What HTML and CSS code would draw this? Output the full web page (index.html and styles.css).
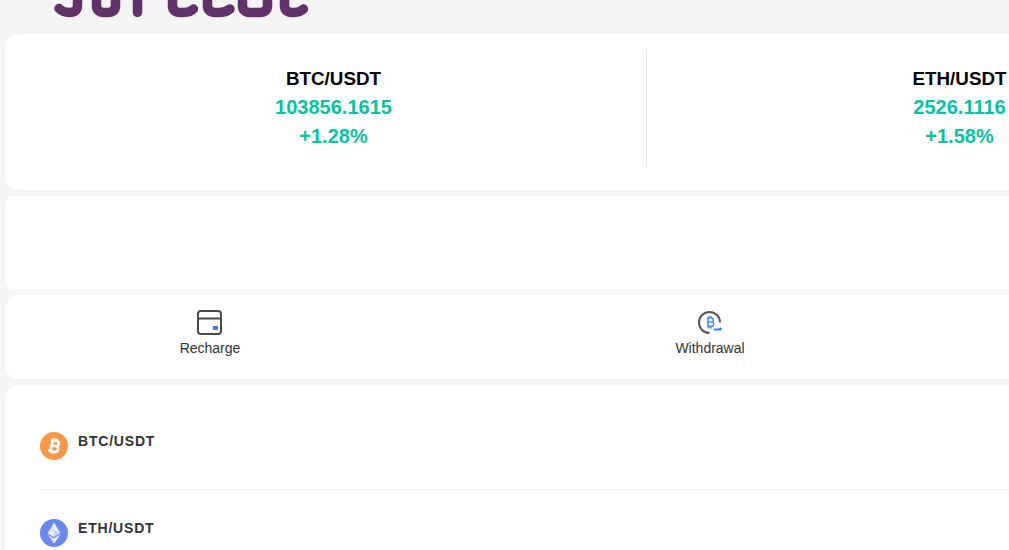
FILE: index.html
```html
<!DOCTYPE html>
<html lang="en">
<head>
<meta charset="utf-8">
<title>Markets</title>
<link rel="stylesheet" href="styles.css">
</head>
<body>
<div class="page">
  <header class="logo-bar">
    <svg class="logo" width="270" height="19" viewBox="0 0 270 19" role="img" aria-label="Logo">
      <g fill="none" stroke="#613169" stroke-width="9.5" stroke-linecap="round" stroke-linejoin="round">
        <path d="M5 8.5 C8 11.5 11 12.5 15 12.5 C21 12.5 23.5 10 23.5 5 V-6"/>
        <path d="M42.5 -6 V6 C42.5 10 45 12.5 50 12.5 H54 C59 12.5 61.5 10 61.5 6 V-6"/>
        <path d="M83.5 -6 V12.5"/>
        <path d="M118.5 -6 V6 C118.5 10 121 12.5 126 12.5 H130 C134 12.5 137 11.5 139.5 9"/>
        <path d="M153.5 -6 V6 C153.5 10 156 12.5 161 12.5 H165 C169 12.5 173 11.5 176 9"/>
        <path d="M188.5 -6 V6 C188.5 10 191 12.5 196 12.5 H206 C211 12.5 213.5 10 213.5 6 V-6"/>
        <path d="M230.5 -6 V6 C230.5 10 233 12.5 238 12.5 H240 C244 12.5 247 11.5 249.5 9"/>
      </g>
    </svg>
  </header>

  <section class="card tickers">
    <div class="ticker">
      <div class="t-name">BTC/USDT</div>
      <div class="t-val">103856.1615</div>
      <div class="t-val">+1.28%</div>
    </div>
    <div class="ticker second">
      <div class="t-name">ETH/USDT</div>
      <div class="t-val">2526.1116</div>
      <div class="t-val">+1.58%</div>
    </div>
  </section>

  <section class="card blank"></section>

  <section class="card actions">
    <div class="action">
      <svg width="26" height="26" viewBox="0 0 26 26" fill="none">
        <rect x="1" y="2" width="23" height="23" rx="3" stroke="#4a4a4a" stroke-width="2"/>
        <path d="M1 9.5H24" stroke="#4a4a4a" stroke-width="2"/>
        <rect x="16" y="17" width="5" height="4" fill="#3f7bf6"/>
      </svg>
      <span>Recharge</span>
    </div>
    <div class="action">
      <svg width="26" height="26" viewBox="0 0 26 26" fill="none">
        <path d="M23 13.5 A10.5 10.5 0 1 0 12.5 24" stroke="#555" stroke-width="2"/>
        <path d="M17 20.5H24.5M24.5 20.5l-2-1.5" stroke="#3f7bf6" stroke-width="2"/>
        <g stroke="#5b8ef5" stroke-width="1.6">
          <path d="M10 9H14.4C17 9 17 13 14.4 13H10M14.4 13C17.4 13 17.4 17.4 14.4 17.4H10M11 9V17.4"/>
          <path d="M12 7V9M14 7V9M12 17.4V19.4M14 17.4V19.4"/>
        </g>
      </svg>
      <span>Withdrawal</span>
    </div>
  </section>

  <section class="card list">
    <div class="row first">
      <svg width="28" height="28" viewBox="0 0 28 28">
        <circle cx="14" cy="14" r="14" fill="#f7984a"/>
        <g transform="rotate(14 14 14)" fill="none" stroke="#fff" stroke-width="2.7">
          <path d="M9.5 8.5H15.5C19 8.5 19 13.7 15.5 13.7H11M15.5 13.7C20 13.7 20 19.5 15.5 19.5H9.5M11.5 8.5V19.5"/>
          <path d="M12.8 6V8.5M15.6 6V8.5M12.8 19.5V22M15.6 19.5V22" stroke-width="1.6"/>
        </g>
      </svg>
      <span class="r-name">BTC/USDT</span>
    </div>
    <div class="row">
      <svg width="28" height="28" viewBox="0 0 28 28">
        <circle cx="14" cy="14" r="14" fill="#6a89ee"/>
        <path d="M14 3.5V11L7.6 14.2Z" fill="#fff" fill-opacity=".75"/>
        <path d="M14 3.5V11L20.4 14.2Z" fill="#fff" fill-opacity=".9"/>
        <path d="M14 11L7.6 14.2 14 18Z" fill="#fff" fill-opacity=".9"/>
        <path d="M14 11L20.4 14.2 14 18Z" fill="#fff" fill-opacity=".6"/>
        <path d="M7.6 15.6L14 19.4V24.5Z" fill="#fff" fill-opacity=".75"/>
        <path d="M20.4 15.6L14 19.4V24.5Z" fill="#fff" fill-opacity=".9"/>
      </svg>
      <span class="r-name">ETH/USDT</span>
    </div>
  </section>
</div>
</body>
</html>
```
FILE: styles.css
```css
* { box-sizing: border-box; }
html, body { margin: 0; height: 100%; overflow: hidden; }
body { background: #f5f5f5; font-family: "Liberation Sans", Arial, sans-serif; }
.page { width: 1272px; padding-left: 6px; display: flex; flex-direction: column; }
.logo-bar { height: 34px; padding-left: 48px; }
.logo { display: block; }
.card { background: #fff; border-radius: 12px; }
.tickers { height: 156px; display: flex; padding: 15px 0 23px 15px; }
.ticker { width: 626px; flex: none; text-align: center; padding-top: 15px; border-right: 1px solid #e5e5e5; }
.ticker.second { border-right: 0; width: 625px; }
.t-name { font-size: 18.8px; font-weight: 700; line-height: 29px; color: #000; }
.t-val { font-size: 20px; font-weight: 700; line-height: 29px; color: #0dc19c; }
.blank { height: 93px; margin-top: 6px; border-radius: 6px; }
.actions { height: 84px; margin-top: 6px; display: flex; padding-top: 14px; }
.action { width: 500px; flex: none; display: flex; flex-direction: column; align-items: center; color: #333; font-size: 14px; line-height: 18px; gap: 4px; }
.action:first-child { margin-left: -46px; }
.list { margin-top: 6px; height: 200px; padding: 0 34px; }
.row { display: flex; align-items: flex-start; gap: 10px; padding-top: 29px; }
.row.first { border-bottom: 1px solid #eee; height: 105px; padding-top: 47px; }
.r-name { font-size: 14px; font-weight: 700; letter-spacing: .8px; color: #333; line-height: 16px; padding-top: 1px; }
```
